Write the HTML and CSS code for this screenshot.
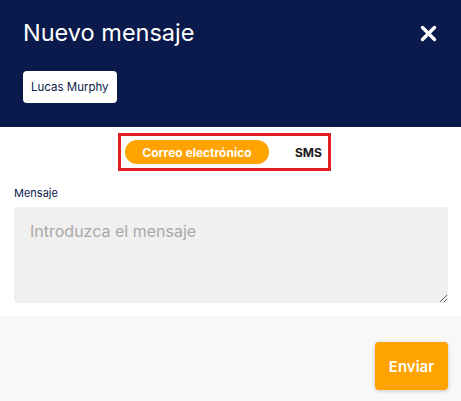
FILE: index.html
```html
<!DOCTYPE html>
<html lang="es">
<head>
<meta charset="utf-8">
<title>Nuevo mensaje</title>
<link rel="stylesheet" href="styles.css">
</head>
<body>
<div class="modal">
  <header class="modal-header">
    <div class="title-row">
      <h1 class="title">Nuevo mensaje</h1>
      <button class="close" aria-label="Cerrar">
        <svg width="17" height="17" viewBox="0 0 17 17"><path d="M2.5 2.5 L14.5 14.5 M14.5 2.5 L2.5 14.5" stroke="#fff" stroke-width="3.4" stroke-linecap="round" fill="none"/></svg>
      </button>
    </div>
    <span class="chip">Lucas Murphy</span>
  </header>
  <div class="toggle-row">
    <div class="toggle">
      <button class="opt active">Correo electrónico</button>
      <button class="opt">SMS</button>
    </div>
  </div>
  <div class="form">
    <label class="label" for="msg">Mensaje</label>
    <textarea id="msg" class="textarea" placeholder="Introduzca el mensaje"></textarea>
  </div>
  <footer class="modal-footer">
    <button class="send">Enviar</button>
  </footer>
</div>
</body>
</html>
```
FILE: styles.css
```css
* { box-sizing: border-box; }
html, body { margin: 0; padding: 0; }
body {
  font-family: Inter, "Noto Sans", sans-serif;
  background: #fff;
  width: 461px;
  height: 401px;
  overflow: hidden;
}
.modal {
  display: flex;
  flex-direction: column;
  height: 401px;
}
.modal-header {
  background: #0a1a4c;
  height: 127px;
  padding: 18px 24px 0 23px;
  display: flex;
  flex-direction: column;
}
.title-row {
  display: flex;
  justify-content: space-between;
  align-items: center;
}
.title {
  margin: 0;
  color: #fff;
  font-size: 23.5px;
  font-weight: 400;
  line-height: 30px;
}
.close {
  background: none;
  border: 0;
  padding: 0;
  width: 17px;
  height: 17px;
  display: block;
}
.close svg { display: block; }
.chip {
  align-self: flex-start;
  margin-top: 23px;
  background: #fff;
  color: #0a1a4c;
  font-size: 11.5px;
  line-height: 32px;
  height: 32px;
  padding: 0 8px;
  border-radius: 4px;
}
.toggle-row {
  padding: 6px 0 0 118px;
  display: flex;
}
.toggle {
  border: 3px solid #e31e24;
  padding: 5px 4px;
  display: flex;
  align-items: center;
  height: 38px;
}
.opt {
  font-family: inherit;
  border: 0;
  background: none;
  font-size: 12px;
  font-weight: 700;
  color: #1a1a1a;
  height: 24px;
  width: 55px;
  text-align: left;
  padding: 0 0 0 26px;
  border-radius: 12px;
}
.opt.active {
  background: #ffa300;
  color: #fff;
  width: 144px;
  padding: 0;
  text-align: center;
}
.form {
  padding: 15px 13px 0 14px;
  display: flex;
  flex-direction: column;
}
.label {
  color: #0a1a4c;
  font-size: 11px;
  line-height: 14px;
  margin-bottom: 7px;
}
.textarea {
  font-family: inherit;
  height: 96px;
  background: #f0f0f0;
  border: 0;
  border-radius: 4px;
  padding: 14px 16px;
  font-size: 16px;
  color: #333;
  resize: vertical;
}
.textarea::placeholder { color: #a9a9a9; }
.modal-footer {
  margin-top: 13px;
  flex: 1;
  background: #f8f8f8;
  display: flex;
  justify-content: flex-end;
  align-items: flex-start;
  padding: 26px 13px 0 0;
}
.send {
  font-family: inherit;
  background: #ffa300;
  color: #fff;
  border: 0;
  border-radius: 4px;
  width: 73px;
  height: 48px;
  font-size: 15px;
  font-weight: 600;
  box-shadow: 0 1px 4px rgba(0,0,0,0.2);
}
```
